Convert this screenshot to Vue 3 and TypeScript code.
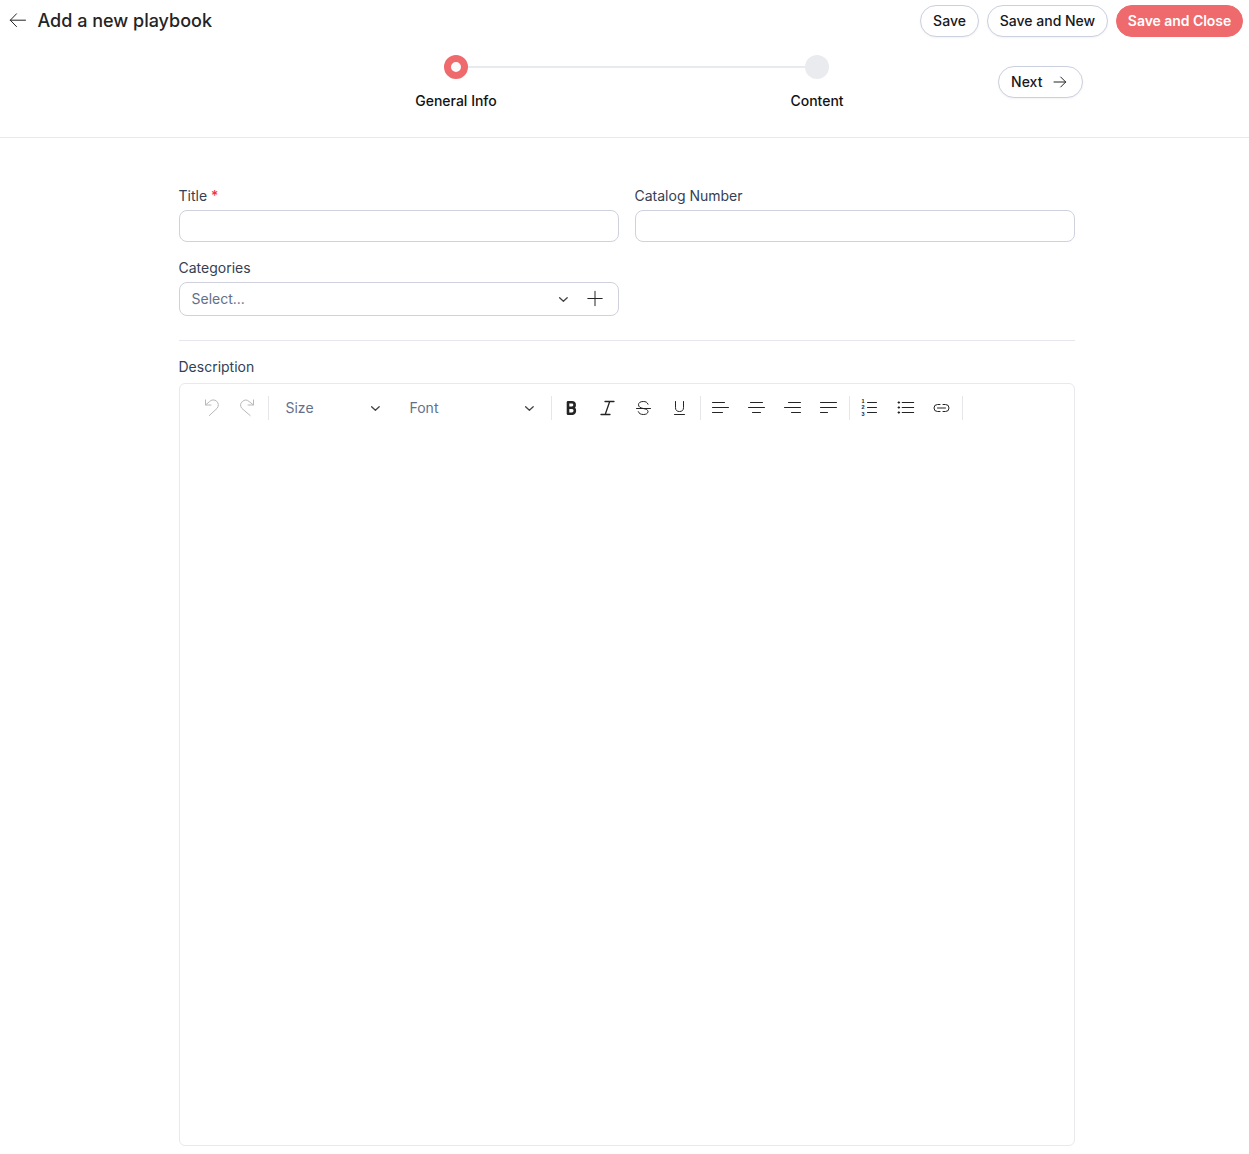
<script setup lang="ts">
interface Tool {
  name: string
  d: string
  kind?: 'bold' | 'italic' | 'muted' | 'numbered' | 'strike' | 'underline' | 'link'
}

const undo: Tool[] = [
  { name: 'Undo', kind: 'muted', d: 'M4.5 1.9V7H10M4.6 6.9L8.5 3.6A5 5 0 0 1 16 10.4L8.3 17.6' },
  { name: 'Redo', kind: 'muted', d: 'M16.5 1.9V7H11M16.4 6.9L12.2 3.6A5 5 0 0 0 4.9 10.4L13.2 17.6' },
]

const groups: Tool[][] = [
  [
    { name: 'Bold', kind: 'bold', d: 'M7 4.3H10.9A2.7 2.7 0 0 1 10.9 9.8H7ZM7 9.8H11.4A3 3 0 0 1 11.4 15.7H7Z' },
    { name: 'Italic', kind: 'italic', d: 'M8 3.5H17M4 16.5H13M12.7 3.5L8.2 16.5' },
    { name: 'Strikethrough', kind: 'strike', d: 'M3.5 10.5H17.5M15 6.2C14.3 4.2 12.7 3.5 10.3 3.5C7.3 3.5 5.5 4.7 5.5 6.8C5.5 8.9 7.3 9.8 10.2 10.5C13.1 11.1 15 11.8 15 13.5C15 15.5 13.1 16.5 10.4 16.5C7.8 16.5 6 15.6 5.3 13.7' },
    { name: 'Underline', kind: 'underline', d: 'M6.5 3.5V9.7C6.5 12.3 8 13.5 10.5 13.5S14.5 12.3 14.5 9.7V3.5M5.5 16.5H15.5' },
  ],
  [
    { name: 'Align left', d: 'M2.5 4.5H14.5M2.5 9.5H18.5M2.5 14.5H12.5' },
    { name: 'Align center', d: 'M4.5 4.5H16.5M2.5 9.5H18.5M6.5 14.5H14.5' },
    { name: 'Align right', d: 'M6.5 4.5H18.5M2.5 9.5H18.5M9.5 14.5H18.5' },
    { name: 'Justify', d: 'M2.5 4.5H18.5M2.5 9.5H18.5M2.5 14.5H9.5' },
  ],
  [
    { name: 'Numbered list', kind: 'numbered', d: 'M8.5 4.5H17.5M8.5 9.5H17.5M8.5 14.5H17.5' },
    { name: 'Bullet list', d: 'M7.2 4.5H18.7M7.2 9.5H18.7M7.2 14.5H18.7M3 4.5H4.7M3.85 3.65V5.35M3 9.5H4.7M3.85 8.65V10.35M3 14.5H4.7M3.85 13.65V15.35' },
    { name: 'Link', kind: 'link', d: 'M9 6.5H6.5A3.5 3.5 0 0 0 6.5 13.5H9M12 6.5H14.5A3.5 3.5 0 0 1 14.5 13.5H12M6.5 10H14.5' },
  ],
]
</script>

<template>
  <div class="page">
    <header class="head">
      <div class="topbar">
        <svg class="back" width="20" height="20" viewBox="0 0 20 20"><path d="M8.5 3.8L2.3 10.2L8.5 16.6M2.3 10.2H17.5" /></svg>
        <h1>Add a new playbook</h1>
        <div class="actions">
          <button class="btn save">Save</button>
          <button class="btn save-new">Save and New</button>
          <button class="btn primary">Save and Close</button>
        </div>
      </div>
      <div class="wizard">
        <div class="stepper">
          <div class="step">
            <span class="dot active"></span>
            <span>General Info</span>
          </div>
          <div class="track"></div>
          <div class="step">
            <span class="dot"></span>
            <span>Content</span>
          </div>
        </div>
        <button class="btn next">
          Next
          <svg width="16" height="16" viewBox="0 0 16 16"><path d="M2 8H13.7M8.7 3L13.7 8L8.7 13" /></svg>
        </button>
      </div>
    </header>

    <main class="form">
      <div class="grid">
        <div class="field">
          <label>Title <span class="req">*</span></label>
          <input type="text" />
        </div>
        <div class="field">
          <label>Catalog Number</label>
          <input type="text" />
        </div>
        <div class="field">
          <label>Categories</label>
          <div class="select">
            <span>Select...</span>
            <svg class="chev" width="12" height="12" viewBox="0 0 12 12"><path d="M2.6 4.7L6.4 8.3L10.2 4.7" /></svg>
            <svg class="plus" width="16" height="16" viewBox="0 0 16 16"><path d="M.8 7.5H15.2M8 .3V14.7" /></svg>
          </div>
        </div>
      </div>
      <hr />
      <label class="desc">Description</label>
      <section class="editor">
        <div class="toolbar">
          <button v-for="t in undo" :key="t.name" class="tool" :class="t.kind" :aria-label="t.name">
            <svg width="20" height="20" viewBox="0 0 20 20"><path :d="t.d" /></svg>
          </button>
          <i class="sep first"></i>
          <div class="drop size"><span>Size</span><svg class="chev" width="12" height="12" viewBox="0 0 12 12"><path d="M2.6 4.7L6.4 8.3L10.2 4.7" /></svg></div>
          <div class="drop font"><span>Font</span><svg class="chev" width="12" height="12" viewBox="0 0 12 12"><path d="M2.6 4.7L6.4 8.3L10.2 4.7" /></svg></div>
          <i class="sep"></i>
          <template v-for="(g, i) in groups" :key="i">
            <button v-for="t in g" :key="t.name" class="tool" :class="t.kind" :aria-label="t.name">
              <svg width="20" height="20" viewBox="0 0 20 20">
                <path :d="t.d" />
                <g v-if="t.kind === 'numbered'" class="digits">
                  <text x="2.4" y="4.9">1</text>
                  <text x="2.4" y="11.4">2</text>
                  <text x="2.4" y="17.9">3</text>
                </g>
              </svg>
            </button>
            <i class="sep"></i>
          </template>
        </div>
      </section>
    </main>
  </div>
</template>

<style>
body {
  margin: 0;
  background: #fff;
}
</style>

<style scoped>
.page {
  box-sizing: border-box;
  height: 1154px;
  font: 400 14px/20px Inter, "Liberation Sans", sans-serif;
  color: #334155;
  overflow: hidden;
}
.page * {
  box-sizing: border-box;
}
svg {
  display: block;
  flex: none;
  overflow: visible;
  fill: none;
  stroke: #242424;
  stroke-width: 1;
  stroke-linecap: round;
  stroke-linejoin: round;
}
.head {
  height: 138px;
  border-bottom: 1px solid #e9e9ed;
}
.topbar {
  display: flex;
  align-items: center;
  height: 42px;
  padding: 0 6px 0 8px;
}
.back {
  margin-bottom: 2px;
}
h1 {
  margin: 0 0 0 9.5px;
  font-size: 18px;
  line-height: 24px;
  font-weight: 500;
  color: #242424;
}
.actions {
  display: flex;
  gap: 8px;
  margin-left: auto;
}
.btn {
  height: 32px;
  padding: 0;
  display: flex;
  align-items: center;
  justify-content: center;
  border: 1px solid #cbd0de;
  border-radius: 16px;
  background: #fff;
  color: #18181b;
  font: 500 14px/20px Inter, "Liberation Sans", sans-serif;
  white-space: nowrap;
  box-shadow: 0 1px 2px rgba(15, 23, 42, 0.05);
}
.save { width: 59px; }
.save-new { width: 121px; }
.primary {
  width: 127px;
  border-color: #ee6a6c;
  background: #ee6a6c;
  color: #fff;
  font-weight: 600;
  letter-spacing: -0.05px;
  box-shadow: none;
}
.wizard {
  display: flex;
  justify-content: space-between;
  padding: 13px 166px 0 411px;
}
.stepper {
  display: flex;
}
.step {
  display: flex;
  flex-direction: column;
  align-items: center;
  gap: 12px;
  width: 90px;
  font-weight: 500;
  color: #121212;
  white-space: nowrap;
}
.dot {
  width: 24px;
  height: 24px;
  border-radius: 50%;
  background: #eaebef;
}
.dot.active {
  border: 7px solid #ee6a6c;
  background: #fafafa;
}
.track {
  width: 337px;
  height: 2px;
  margin: 11px -33px 0;
  background: #e9eaef;
}
.next {
  width: 85px;
  margin-top: 11px;
  padding-right: 1.5px;
  gap: 10px;
}
.form {
  width: 896px;
  margin-left: 179px;
  padding-top: 48px;
}
.grid {
  display: grid;
  grid-template-columns: 440px 440px;
  gap: 16px;
}
label {
  display: block;
  height: 20px;
  margin: 0 0 4px -0.5px;
}
.req {
  color: #ef3340;
  font-weight: 500;
}
input,
.select {
  display: block;
  width: 100%;
  height: 32px;
  border: 1px solid #cfd2dd;
  border-radius: 8px;
  background: #fff;
}
.select {
  display: flex;
  align-items: center;
  height: 34px;
  padding: 0 15px 0 11.5px;
  color: #64708a;
}
.select .chev {
  margin-left: auto;
}
.select .plus {
  margin-left: 18px;
}
hr {
  height: 1px;
  margin: 24px 0 16px;
  border: 0;
  background: #e6e7ed;
}
.desc {
  margin-bottom: 6px;
}
.editor {
  height: 763px;
  border: 1px solid #e9e9ed;
  border-radius: 6px;
}
.toolbar {
  display: flex;
  align-items: center;
  height: 48px;
  padding-left: 13px;
}
.tool {
  display: flex;
  align-items: center;
  justify-content: center;
  width: 36px;
  height: 32px;
  padding: 0;
  border: 0;
  background: none;
}
.muted svg { stroke: #b8b8b8; }
.bold svg { stroke-width: 2.6; }
.italic svg { stroke-width: 1.3; }
.digits text {
  fill: #242424;
  stroke: none;
  font: 700 5.5px "Liberation Sans", sans-serif;
}
.sep {
  width: 1px;
  height: 24px;
  margin: 0 1px 0 3px;
  background: #e5e5ea;
}
.sep.first {
  margin: 0 0 0 3px;
}
.drop {
  display: flex;
  align-items: center;
  justify-content: space-between;
  color: #64708a;
}
.size {
  width: 95.5px;
  margin-left: 16.5px;
}
.font {
  width: 125.5px;
  margin: 0 13px 0 28.5px;
}
.chev {
  stroke: #444;
  stroke-width: 1.3;
}
</style>
